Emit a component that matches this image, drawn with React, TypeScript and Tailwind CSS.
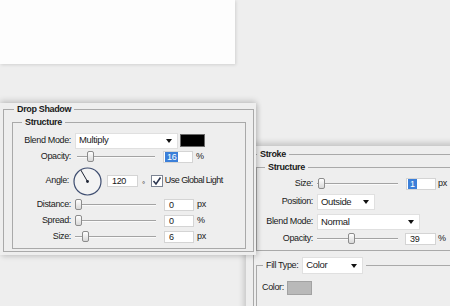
import type { ReactNode } from "react";

const LINE = "border-[#a9a9a9]";

function Slider({ pos, width = 80 }: { pos: number; width?: number }) {
  return (
    <div className="relative h-[12px]" style={{ width }}>
      <div className="absolute left-0 right-0 top-[5px] h-[1px] bg-[#a3a3a3]" />
      <div className="absolute left-0 right-0 top-[6px] h-[1px] bg-[#fafafa]" />
      <div
        className="absolute top-0 w-[7px] h-[11px] rounded-[2px] border border-[#8c8c8c] bg-gradient-to-b from-white to-[#d8d8d8]"
        style={{ left: pos }}
      />
    </div>
  );
}

function Input({ value, w = 30, selected = false }: { value: string; w?: number; selected?: boolean }) {
  return (
    <div
      className="h-[12px] bg-white border border-[#d4d4d4] flex items-center pl-[1px] leading-none"
      style={{ width: w }}
    >
      {selected ? (
        <span className="bg-[#3b7fd9] text-white h-full flex items-center px-[2px]">{value}</span>
      ) : (
        <span className="px-[3px]">{value}</span>
      )}
    </div>
  );
}

function Select({ value, w }: { value: string; w: number }) {
  return (
    <div
      className="h-[16px] bg-white border border-[#e0e0e0] flex items-center justify-between pl-[3px] pr-[5px] text-[9.5px]"
      style={{ width: w }}
    >
      <span>{value}</span>
      <svg width="6" height="4" viewBox="0 0 6 4">
        <path d="M0 0 H6 L3 4 Z" fill="#111" />
      </svg>
    </div>
  );
}

function Row({ label, lw, h = 12, children }: { label: string; lw: number; h?: number; children: ReactNode }) {
  return (
    <div className="flex items-center gap-[4px]" style={{ height: h }}>
      <span className="text-right shrink-0" style={{ width: lw }}>
        {label}
      </span>
      {children}
    </div>
  );
}

function Dial() {
  return (
    <svg width="29" height="29" viewBox="0 0 29 29">
      <circle cx="14.5" cy="14.5" r="13.5" fill="#f3f3f3" stroke="#3e4d70" strokeWidth="1.2" />
      <line x1="14.5" y1="14.5" x2="7.8" y2="3" stroke="#1d2333" strokeWidth="1" />
      <circle cx="14.5" cy="14.5" r="1.4" fill="#1d2333" />
    </svg>
  );
}

function Check() {
  return (
    <svg width="12" height="12" viewBox="0 0 12 12">
      <rect x="0.5" y="0.5" width="11" height="11" fill="#fff" stroke="#7d8594" />
      <path d="M2.5 6 L5 9 L9.5 2.5" fill="none" stroke="#2c3650" strokeWidth="1.6" />
    </svg>
  );
}

export default function App() {
  return (
    <div className="relative w-[450px] h-[306px] overflow-hidden bg-[#eeeeee] text-[#1a1a1a] font-['Liberation_Sans',Arial,sans-serif] text-[9px] tracking-[-0.35px]">
      {/* canvas card */}
      <div className="absolute left-0 top-0 w-[235px] h-[64px] bg-[#fdfdfd] shadow-[1px_1px_3px_rgba(0,0,0,0.12)]" />

      {/* Stroke panel */}
      <div className="absolute left-[246px] top-[146px] w-[220px] h-[170px] bg-[#eeeeee] pl-[7px] pt-[2px] shadow-[-2px_-3px_6px_rgba(0,0,0,0.18)]">
        <fieldset className={`border ${LINE} h-[200px] pl-[2px]`}>
          <legend className="ml-[1px] px-[3px] font-bold leading-[12px]">Stroke</legend>
          <fieldset className={`mt-[1px] border-t border-l border-b ${LINE}`}>
            <legend className="ml-[8px] px-[3px] font-bold leading-[12px]">Structure</legend>
            <div className="flex flex-col pt-[5px] pb-[5px]">
              <Row label="Size:" lw={56}>
                <Slider pos={1} width={81} />
                <div className="ml-[4px] flex items-center gap-[2px]">
                  <Input value="1" w={30} selected />
                  <span>px</span>
                </div>
              </Row>
              <div className="mt-[4px]">
                <Row label="Position:" lw={56} h={16}>
                  <Select value="Outside" w={58} />
                </Row>
              </div>
              <div className="mt-[4px]">
                <Row label="Blend Mode:" lw={56} h={16}>
                  <Select value="Normal" w={103} />
                </Row>
              </div>
              <div className="mt-[3px]">
                <Row label="Opacity:" lw={56}>
                  <Slider pos={31} width={81} />
                  <div className="ml-[3px] flex items-center gap-[2px]">
                    <Input value="39" w={31} />
                    <span>%</span>
                  </div>
                </Row>
              </div>
            </div>
          </fieldset>
          <fieldset className={`mt-[6px] border-t border-l ${LINE} h-[80px]`}>
            <legend className="ml-[6px] px-[3px] flex items-center gap-[4px] h-[17px]">
              <span>Fill Type:</span>
              <div className="h-[17px] w-[61px] bg-white border border-[#e0e0e0] flex items-center justify-between pl-[3px] pr-[5px] text-[9.5px]">
                <span>Color</span>
                <svg width="6" height="4" viewBox="0 0 6 4">
                  <path d="M0 0 H6 L3 4 Z" fill="#111" />
                </svg>
              </div>
            </legend>
            <div className="flex items-center gap-[3px] pl-[5px] pt-[7px]">
              <span>Color:</span>
              <div className="w-[25px] h-[14px] bg-[#b9b9b9] border border-[#a2a2a2]" />
            </div>
          </fieldset>
        </fieldset>
      </div>

      {/* Drop Shadow panel */}
      <div className="absolute left-0 top-[103px] z-10 w-[256px] h-[152px] bg-[#eeeeee] pl-[3px] pr-[2px] shadow-[0_-2px_6px_rgba(0,0,0,0.18),2px_2px_5px_rgba(0,0,0,0.12)]">
        <fieldset className={`border ${LINE} pl-[8px] pr-[7px] pb-[2px]`}>
          <legend className="ml-[2px] px-[3px] font-bold leading-[12px]">Drop Shadow</legend>
          <fieldset className={`mt-[1px] border ${LINE}`}>
            <legend className="ml-[9px] px-[3px] font-bold leading-[12px]">Structure</legend>
            <div className="flex flex-col pt-[5px] pb-[5px]">
              <Row label="Blend Mode:" lw={58} h={15}>
                <Select value="Multiply" w={103} />
                <div className="ml-[-2px] w-[25px] h-[13px] bg-black border border-[#6a6a6a]" />
              </Row>
              <div className="mt-[3px]">
                <Row label="Opacity:" lw={58}>
                  <div className="ml-[2px]">
                    <Slider pos={10} width={78} />
                  </div>
                  <div className="ml-[4px] flex items-center gap-[3px]">
                    <Input value="16" w={30} selected />
                    <span>%</span>
                  </div>
                </Row>
              </div>
              <div className="mt-[4px]">
                <Row label="Angle:" lw={56} h={28}>
                  <Dial />
                  <div className="ml-[1px] flex items-center">
                    <Input value="120" w={31} />
                    <span className="ml-[4px] self-start mt-[7px] text-[8px]">°</span>
                    <div className="ml-[6px] flex items-center gap-[2px] tracking-[-0.55px]">
                      <Check />
                      <span>Use Global Light</span>
                    </div>
                  </div>
                </Row>
              </div>
              {[
                { label: "Distance:", pos: 0, val: "0", unit: "px" },
                { label: "Spread:", pos: 0, val: "0", unit: "%" },
                { label: "Size:", pos: 7, val: "6", unit: "px" },
              ].map((r) => (
                <div key={r.label} className="mt-[4px]">
                  <Row label={r.label} lw={58}>
                    <Slider pos={r.pos} width={81} />
                    <div className="ml-[4px] flex items-center gap-[3px]">
                      <Input value={r.val} w={30} />
                      <span>{r.unit}</span>
                    </div>
                  </Row>
                </div>
              ))}
            </div>
          </fieldset>
        </fieldset>
      </div>
    </div>
  );
}
